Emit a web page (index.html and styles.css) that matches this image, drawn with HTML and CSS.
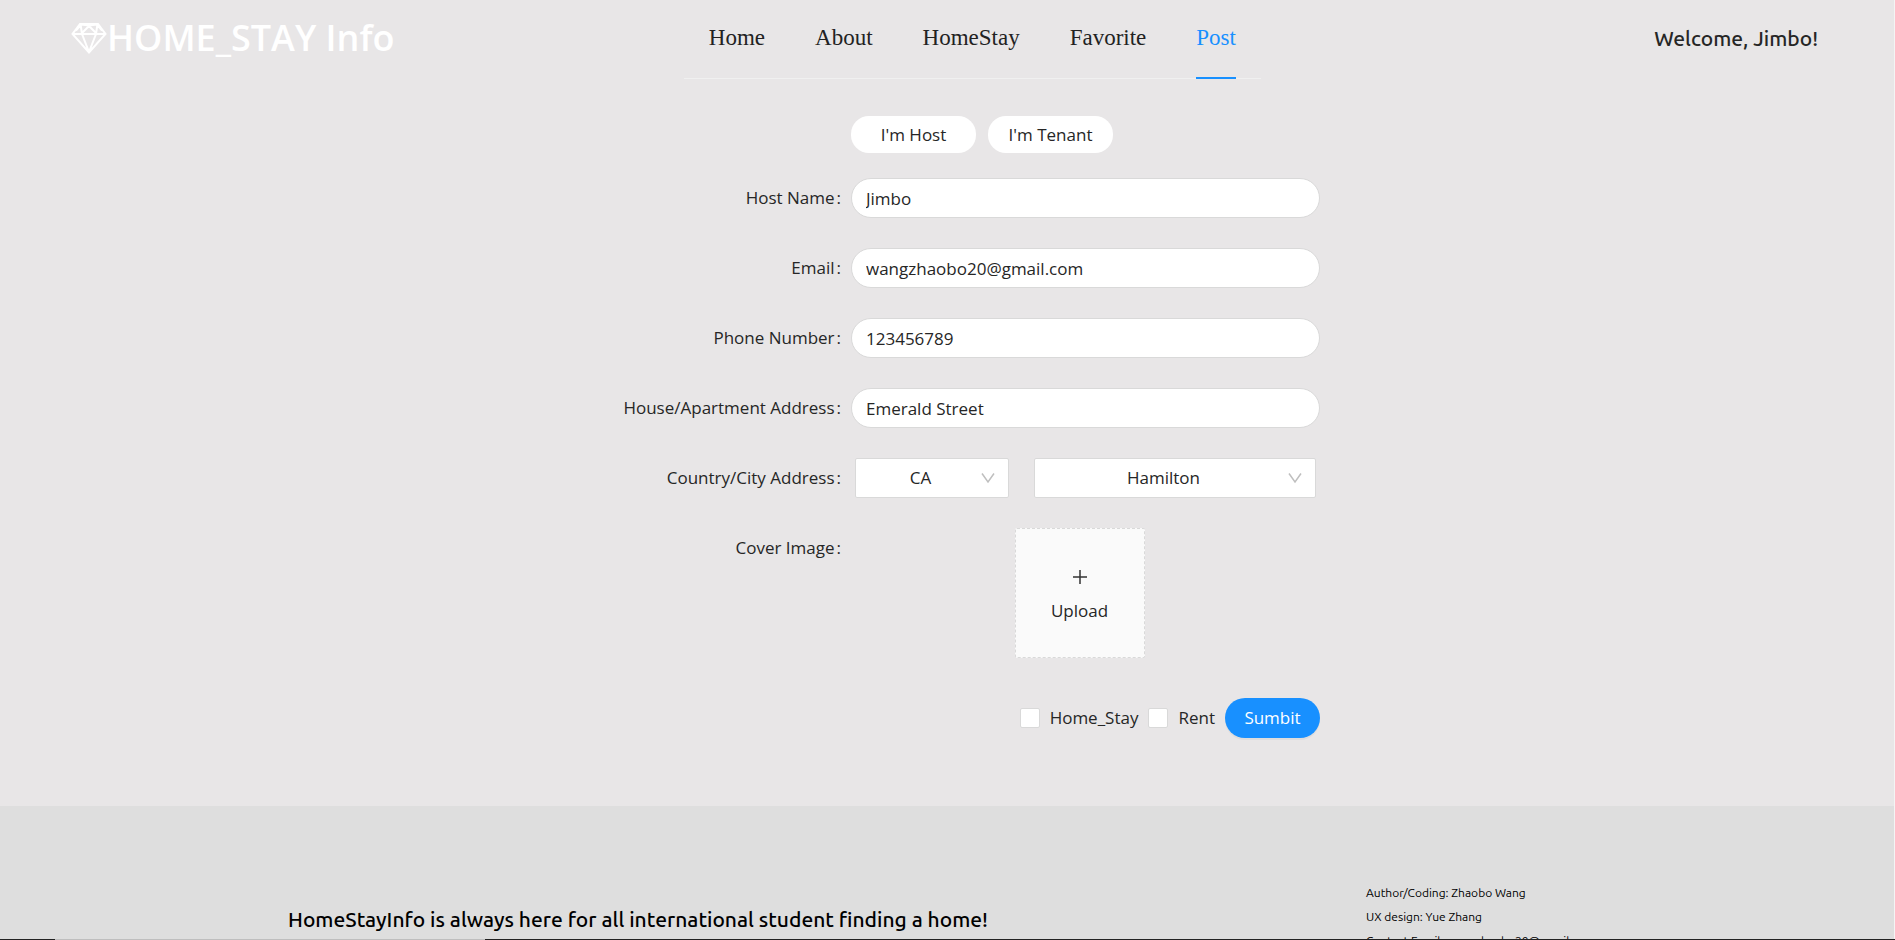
FILE: index.html
```html
<!DOCTYPE html>
<html lang="en">
<head>
<meta charset="utf-8">
<meta name="viewport" content="width=device-width, initial-scale=1">
<title>HOME_STAY Info</title>
<link rel="stylesheet" href="styles.css">
</head>
<body>
<div class="page">
  <header class="header">
    <a class="logo" href="#">
      <svg class="logo-icon" viewBox="0 0 36 32" aria-hidden="true"><path d="M9 2h18l7.500 10L18 30.500 1.500 12zM1.500 12h33M9.500 2 11 12l7 18 7-18 1.500-10M11 11l7-7 7 7M5 8.500 10 2.500l8 1 8-1 5 6"/></svg>
      <span>HOME_STAY Info</span>
    </a>
    <nav class="nav">
      <a class="nav-item" href="#">Home</a>
      <a class="nav-item" href="#">About</a>
      <a class="nav-item" href="#">HomeStay</a>
      <a class="nav-item" href="#">Favorite</a>
      <a class="nav-item nav-item-active" href="#" aria-current="page">Post</a>
    </nav>
    <p class="welcome">Welcome, Jimbo!</p>
  </header>

  <main class="main">
    <form class="form">
      <div class="row row-roles">
        <div class="field roles">
          <button class="role" type="button">I'm Host</button>
          <button class="role" type="button">I'm Tenant</button>
        </div>
      </div>
      <div class="row">
        <label class="label" for="name">Host Name<span class="colon">:</span></label>
        <div class="field"><input class="input" id="name" type="text" value="Jimbo"></div>
      </div>
      <div class="row">
        <label class="label" for="email">Email<span class="colon">:</span></label>
        <div class="field"><input class="input" id="email" type="email" value="wangzhaobo20@gmail.com"></div>
      </div>
      <div class="row">
        <label class="label" for="phone">Phone Number<span class="colon">:</span></label>
        <div class="field"><input class="input" id="phone" type="tel" value="123456789"></div>
      </div>
      <div class="row">
        <label class="label" for="address">House/Apartment Address<span class="colon">:</span></label>
        <div class="field"><input class="input" id="address" type="text" value="Emerald Street"></div>
      </div>
      <div class="row">
        <label class="label" for="country">Country/City Address<span class="colon">:</span></label>
        <div class="field selects">
          <div class="select-wrap">
            <select class="select" id="country"><option>CA</option></select>
            <svg class="chevron" viewBox="0 0 14 12" aria-hidden="true"><path d="M1 1.500 7 10l6-8.500"/></svg>
          </div>
          <div class="select-wrap">
            <select class="select" id="city" aria-label="City"><option>Hamilton</option></select>
            <svg class="chevron" viewBox="0 0 14 12" aria-hidden="true"><path d="M1 1.500 7 10l6-8.500"/></svg>
          </div>
        </div>
      </div>
      <div class="row row-upload">
        <label class="label" for="upload">Cover Image<span class="colon">:</span></label>
        <div class="field upload-field">
          <button class="upload" id="upload" type="button">
            <svg class="plus" viewBox="0 0 16 16" aria-hidden="true"><path d="M8 1v14M1 8h14"/></svg>
            <span>Upload</span>
          </button>
        </div>
      </div>
      <div class="row row-submit">
        <div class="field actions">
          <label class="check"><input class="checkbox" type="checkbox">Home_Stay</label>
          <label class="check"><input class="checkbox" type="checkbox">Rent</label>
          <button class="submit" type="submit">Sumbit</button>
        </div>
      </div>
    </form>
  </main>

  <footer class="footer">
    <p class="slogan">HomeStayInfo is always here for all international student finding a home!</p>
    <div class="credits">
      <p>Author/Coding: Zhaobo Wang</p>
      <p>UX design: Yue Zhang</p>
      <p>Contact Email: wangzhaobo20@gmail.com</p>
    </div>
  </footer>
</div>
<div class="bottom-edge"></div>
</body>
</html>
```

FILE: styles.css
```css
* {
  box-sizing: border-box;
}

body {
  margin: 0;
  height: 100vh;
  overflow: hidden;
  display: flex;
  flex-direction: column;
  font: 17px/24px "Open Sans", sans-serif;
  color: #262626;
  background: #e8e6e7;
}

p {
  margin: 0;
}

button,
input,
select {
  font: inherit;
  color: inherit;
}

.page {
  flex: 1;
  min-height: 0;
  overflow: hidden;
  display: flex;
  flex-direction: column;
  border-right: 1px solid #f4f4f4;
}

.header {
  flex: none;
  display: grid;
  grid-template-columns: 615fr auto 559fr;
  align-items: start;
  padding: 0 76px 0 71px;
}

.logo {
  display: flex;
  align-items: center;
  height: 76px;
  font-size: 36px;
  font-weight: 600;
  color: #fff;
  text-decoration: none;
}

.logo-icon {
  width: 36px;
  height: 32px;
  fill: none;
  stroke: #fff;
  stroke-width: 2;
}

.nav {
  display: flex;
  gap: 50px;
  padding: 0 25px;
  border-bottom: 1px solid #f0f0f0;
}

.nav-item {
  height: 79px;
  margin-bottom: -1px;
  border-bottom: 2px solid transparent;
  font: 23px/76px "Liberation Serif", serif;
  color: #222;
  text-decoration: none;
}

.nav-item-active {
  color: #1890ff;
  border-color: #1890ff;
}

.welcome {
  justify-self: end;
  font: 500 21px/76px Ubuntu, "Noto Sans", sans-serif;
}

.main {
  flex: none;
  padding: 37px 0 68px;
}

.row {
  display: grid;
  grid-template-columns: 851fr 469fr 574fr;
  margin-bottom: 30px;
}

.row-roles {
  margin-bottom: 25px;
}

.row-upload {
  margin-bottom: 40px;
}

.row-submit {
  margin-bottom: 0;
}

.label {
  padding-right: 10px;
  line-height: 40px;
  text-align: right;
}

.colon {
  margin-left: 2px;
}

.field {
  grid-column: 2;
}

.roles {
  display: flex;
  gap: 12px;
}

.role {
  width: 125px;
  height: 37px;
  padding: 0;
  border: 0;
  border-radius: 18px;
  background: #fff;
}

.input {
  display: block;
  width: 100%;
  height: 40px;
  padding: 0 14px;
  border: 1px solid #d9d9d9;
  border-radius: 20px;
  background: #fff;
}

.selects {
  display: grid;
  grid-template-columns: 154fr 282fr;
  gap: 25px;
  padding: 0 4px;
}

.select-wrap {
  display: grid;
  align-items: center;
}

.select {
  grid-area: 1 / 1;
  width: 100%;
  height: 40px;
  padding: 0 35px 0 12px;
  appearance: none;
  border: 1px solid #d9d9d9;
  border-radius: 2px;
  background: #fff;
  text-align: center;
  text-align-last: center;
}

.chevron {
  grid-area: 1 / 1;
  justify-self: end;
  width: 14px;
  height: 12px;
  margin-right: 14px;
  fill: none;
  stroke: #bfbfbf;
  stroke-width: 1.5;
  pointer-events: none;
}

.upload-field {
  display: flex;
  justify-content: center;
  padding-right: 12px;
}

.upload {
  display: flex;
  flex-direction: column;
  align-items: center;
  justify-content: center;
  gap: 14px;
  width: 130px;
  height: 130px;
  padding: 6px 0 0;
  border: 1px dashed #d9d9d9;
  border-radius: 2px;
  background: #fafafa;
}

.plus {
  width: 16px;
  height: 16px;
  stroke: #333;
  stroke-width: 1.5;
}

.actions {
  display: flex;
  justify-content: flex-end;
  align-items: center;
  gap: 10px;
}

.check {
  display: flex;
  align-items: center;
  gap: 10px;
}

.checkbox {
  appearance: none;
  width: 20px;
  height: 20px;
  margin: 0;
  border: 1px solid #d9d9d9;
  border-radius: 2px;
  background: #fff;
}

.submit {
  width: 95px;
  height: 40px;
  padding: 0;
  border: 0;
  border-radius: 20px;
  color: #fff;
  background: #1890ff;
  box-shadow: 0 2px 0 rgba(0, 0, 0, 0.04);
}

.footer {
  flex: none;
  display: grid;
  grid-template-columns: 1366fr 528fr;
  align-items: start;
  padding-top: 75px;
  background: #dedede;
  color: #000;
}

.slogan {
  padding: 24px 0 0 288px;
  font: 500 21px/28px Ubuntu, "Noto Sans", sans-serif;
}

.credits {
  font: 12px/24px Ubuntu, "Noto Sans", sans-serif;
}

.bottom-edge {
  flex: none;
  height: 1px;
  background: linear-gradient(90deg, #222 55px, #bebebe 55px 485px, #222 485px);
}
```
